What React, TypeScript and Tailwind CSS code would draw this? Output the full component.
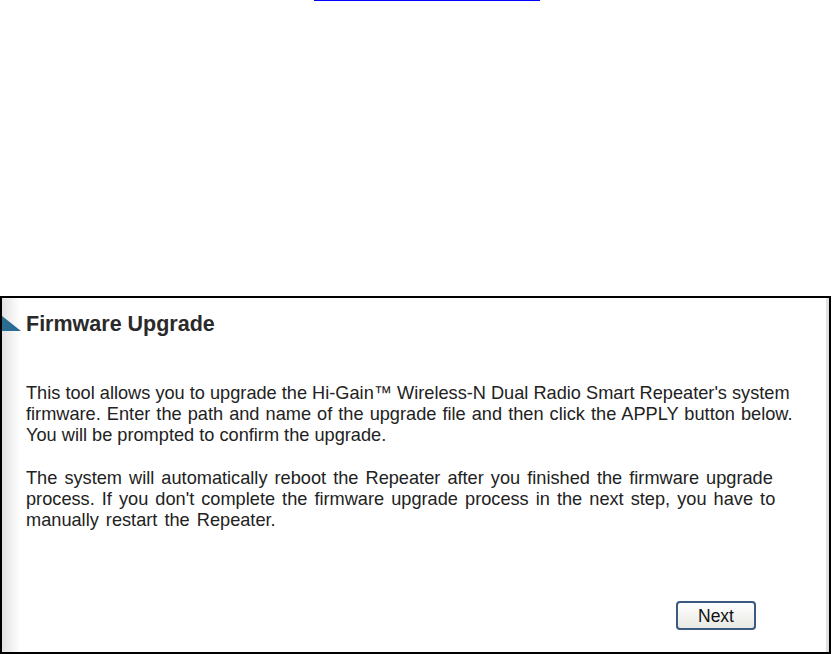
export default function App() {
  return (
    <div className="w-[832px] h-[654px] bg-white flex flex-col font-['Liberation_Sans',Arial,sans-serif] text-[#222]">
      <div className="h-[296px] flex justify-start">
        <div className="ml-[314px] w-[226px] h-px bg-[#0000ff]" />
      </div>
      <div className="flex-1 flex border-t-2 border-l-2 border-b-2 border-r-2 border-black mr-[1px]">
        <div className="w-[18px] shrink-0 bg-gradient-to-r from-[#e2e2e2] to-white" />
        <div className="flex-1 min-w-0 flex flex-col relative">
          <svg className="absolute left-[-18px] top-[18px]" width="19" height="15" viewBox="0 0 19 15">
            <polygon points="0,0 0,15 19,15" fill="#2b6c93" />
          </svg>
          <h1 className="mt-[12px] ml-[6px] text-[21.5px] leading-[28px] font-bold text-[#2a2a2a]">Firmware Upgrade</h1>
          <div className="mt-[45px] ml-[6px] text-[18.2px] leading-[21px] text-[#222] whitespace-nowrap">
            <p>
              This tool allows you to upgrade the Hi-Gain™ Wireless-N Dual Radio Smart Repeater's system
              <br />
              <span className="[word-spacing:1px]">
                firmware. Enter the path and name of the upgrade file and then click the APPLY button below.
              </span>
              <br />
              You will be prompted to confirm the upgrade.
            </p>
            <p className="mt-[22px] [word-spacing:2px]">
              The system will automatically reboot the Repeater after you finished the firmware upgrade
              <br />
              process. If you don't complete the firmware upgrade process in the next step, you have to
              <br />
              manually restart the Repeater.
            </p>
          </div>
          <div className="flex-1" />
          <div className="flex justify-end pr-[70px] pb-[22px]">
            <button className="w-[80px] h-[29px] rounded-[4px] border-2 border-[#3a5a80] bg-gradient-to-b from-white to-[#e8e8e4] text-[17.5px] text-[#111]">
              Next
            </button>
          </div>
        </div>
        <div className="w-[3px] shrink-0 bg-[#e0e0e0]" />
      </div>
    </div>
  );
}
